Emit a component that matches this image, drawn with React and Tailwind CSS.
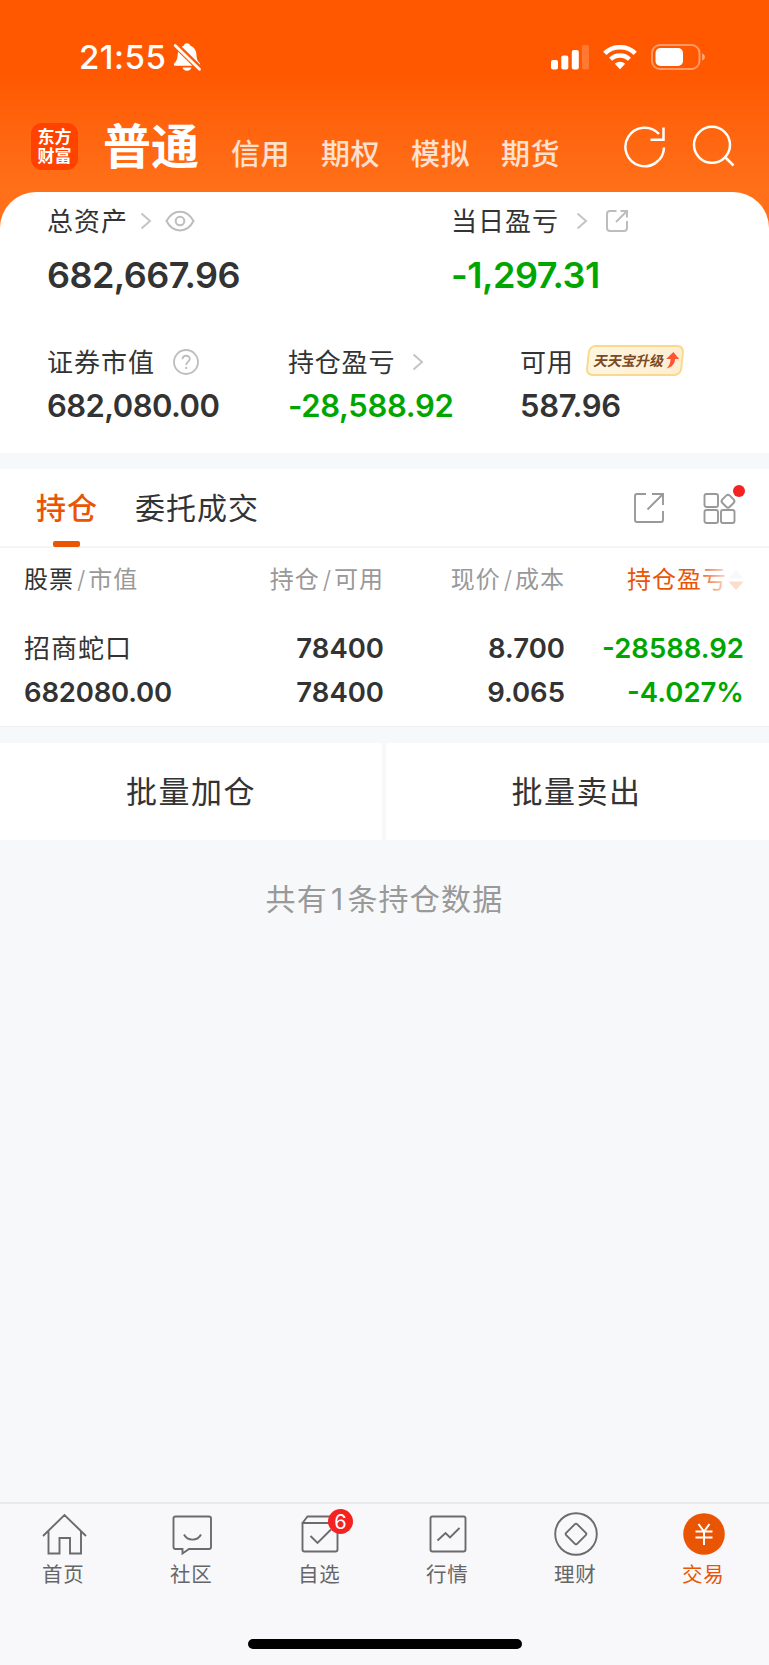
import { clsx } from "clsx";

function Chevron() {
  return (
    <svg width="12" height="18" viewBox="0 0 12 18" fill="none" stroke="#c4c4c4" strokeWidth="2">
      <path d="M1.5 1.5 L10 9 L1.5 16.5" />
    </svg>
  );
}

function StatusBar() {
  return (
    <div className="flex h-[114px] items-center pl-[79px] pr-[63px] text-white">
      <span className="text-[33px] leading-[40px] font-medium tracking-[0.5px]">21:55</span>
      <svg className="ml-[6px]" width="30" height="32" viewBox="0 0 30 32">
        <path
          fill="#fff"
          d="M15 2.2c1.7 0 3 1 3.4 2.5 3.8 1.2 5.8 4.4 6 8.6.2 5 1.2 6.8 3.2 8.7.9.9.8 2.7-.8 2.7H3.3c-1.600 0-1.800-1.700-.8-2.700 2-2 3-3.800 3.200-8.700.2-4.200 2.200-7.400 6-8.600C12 3.200 13.300 2.200 15 2.200zM10.500 26.500h9c-.5 2-2.300 3.300-4.500 3.300s-4-1.300-4.500-3.300z"
        />
        <path d="M3.300 3.600 L28 28" stroke="#ff5800" strokeWidth="6.200" />
        <path d="M3.200 4.400 L27.500 28.300" stroke="#fff" strokeWidth="2.800" strokeLinecap="round" />
      </svg>
      <div className="ml-auto flex items-center gap-[14px]">
        <svg width="38" height="25" viewBox="0 0 38 25" fill="#fff">
          <rect x="0" y="15" width="7" height="9.500" rx="2" />
          <rect x="10.300" y="10.500" width="7" height="14" rx="2" />
          <rect x="20.800" y="5" width="7" height="19.500" rx="2" />
          <rect x="31" y="0" width="7" height="24.500" rx="2" opacity="0.2" />
        </svg>
        <svg width="34" height="25" viewBox="0 0 34 25" fill="none" stroke="#fff">
          <path d="M1.800 8.400 C10 0.200 24 0.200 32.200 8.400" strokeWidth="4.600" />
          <path d="M7.600 14.300 C12.800 9.200 21.200 9.200 26.400 14.300" strokeWidth="4.400" />
          <path d="M17 24.300 L11.800 18.800 C14.700 16 19.300 16 22.200 18.800 Z" fill="#fff" stroke="none" />
        </svg>
        <svg width="55" height="26" viewBox="0 0 55 26">
          <rect x="1" y="1" width="47.500" height="24" rx="8" fill="none" stroke="#fff" strokeOpacity="0.4" strokeWidth="2" />
          <rect x="4.500" y="4" width="27.500" height="18" rx="5" fill="#fff" />
          <path d="M51 9.500 C55 10.500 55 15.500 51 16.500 Z" fill="#fff" opacity="0.45" />
        </svg>
      </div>
    </div>
  );
}

const accountTabs = ["信用", "期权", "模拟", "期货"];

function AccountHeader() {
  return (
    <div className="flex h-[78px] pl-[31px] text-white">
      <div className="mt-[9px] flex h-[47px] w-[47px] flex-col items-center justify-center rounded-[11px] bg-[#ff4200] text-[17px] leading-[19px] font-bold">
        <span>东方</span>
        <span>财富</span>
      </div>
      <span className="ml-[25px] pt-[2px] text-[48px] leading-[62px] font-bold">普通</span>
      <div className="ml-[32px] flex gap-[31px] pt-[2px] text-[29px] leading-[78px] font-medium tracking-[0.5px] text-white/80">
        {accountTabs.map((t) => (
          <span key={t}>{t}</span>
        ))}
      </div>
      <svg className="mt-[11px] ml-[63px]" width="44" height="44" viewBox="0 0 44 44" fill="none" stroke="#fff" strokeWidth="2.5">
        <path d="M41 22.5 A19.300 19.300 0 1 1 36 9" />
        <path d="M40.500 2.500 V14.800 H27.500" />
      </svg>
      <svg className="mt-[11px] ml-[25px]" width="44" height="44" viewBox="0 0 44 44" fill="none" stroke="#fff" strokeWidth="2.5">
        <circle cx="20" cy="19.800" r="18" />
        <path d="M32.500 31.500 L41.500 40.500" />
      </svg>
    </div>
  );
}

function Summary() {
  return (
    <section className="h-[261px] rounded-t-[36px] bg-white pl-[47px]">
      <div className="flex">
        <div className="w-[404px]">
          <div className="flex h-[58px] items-center">
            <span className="text-[26px] tracking-[1px]">总资产</span>
            <span className="ml-[12px]"><Chevron /></span>
            <svg className="ml-[13px]" width="30" height="22" viewBox="0 0 30 22" fill="none" stroke="#bdbdbd" strokeWidth="2">
              <path d="M1.500 11 C8 -1.500 22 -1.500 28.500 11 C22 23.500 8 23.500 1.500 11 Z" />
              <circle cx="15" cy="11" r="4.300" />
            </svg>
          </div>
          <div className="mt-px text-[36px] leading-[48px] font-semibold tracking-[-0.55px]">682,667.96</div>
        </div>
        <div>
          <div className="flex h-[58px] items-center">
            <span className="text-[26px] tracking-[1px]">当日盈亏</span>
            <span className="ml-[17px]"><Chevron /></span>
            <svg className="ml-[17px]" width="24" height="24" viewBox="0 0 24 24" fill="none" stroke="#bdbdbd" strokeWidth="2">
              <path d="M11.500 2 H5 Q2 2 2 5 V19 Q2 22 5 22 H19 Q22 22 22 19 V12" />
              <path d="M11 13 L22 2 M15.500 2 H22 V8.500" />
            </svg>
          </div>
          <div className="mt-px text-[36px] leading-[48px] font-semibold tracking-[-0.5px] text-[#00a600]">-1,297.31</div>
        </div>
      </div>
      <div className="mt-[45px] flex">
        <div className="w-[241px]">
          <div className="flex h-[36px] items-center">
            <span className="text-[26px] tracking-[1px]">证券市值</span>
            <svg className="ml-[18px]" width="26" height="26" viewBox="0 0 26 26" fill="none" stroke="#bdbdbd" strokeWidth="1.8">
              <circle cx="13" cy="13" r="12" />
              <path d="M9.500 10.300 C9.500 5.600 16.800 5.600 16.800 10 C16.800 12.500 13.200 12.800 13.200 16" />
              <path d="M13.200 17.800 V20" />
            </svg>
          </div>
          <div className="mt-[6px] text-[31px] leading-[40px] font-semibold tracking-[-0.55px]">682,080.00</div>
        </div>
        <div className="w-[232px]">
          <div className="flex h-[36px] items-center">
            <span className="text-[26px] tracking-[0.8px]">持仓盈亏</span>
            <span className="ml-[17px]"><Chevron /></span>
          </div>
          <div className="mt-[6px] text-[31px] leading-[40px] font-semibold tracking-[-0.35px] text-[#00a600]">-28,588.92</div>
        </div>
        <div>
          <div className="flex h-[36px] items-center">
            <span className="text-[26px] tracking-[0.8px]">可用</span>
            <div className="mb-[4px] ml-[13px] flex h-[31px] w-[96px] -skew-x-6 items-center rounded-[7px] border-2 border-[#fbd98a] bg-linear-to-r from-[#fff6e0] to-[#fdeed2] pl-[5px]">
              <span className="-skew-x-6 text-[14px] leading-[20px] font-bold text-[#7a4a26]">天天宝升级</span>
              <svg className="ml-[2px]" width="13" height="17" viewBox="0 0 13 17">
                <path d="M6.500 0 L13 7 H9 C9 12 7 15 1.500 16.500 C4 13.500 4.500 11 4.500 7 H0 Z" fill="#ff5533" />
              </svg>
            </div>
          </div>
          <div className="mt-[6px] text-[31px] leading-[40px] font-semibold tracking-[-0.3px]">587.96</div>
        </div>
      </div>
    </section>
  );
}

function PositionTabs() {
  return (
    <div className="flex h-[79px] items-center border-b-2 border-[#f5f5f6] pr-[32px] pl-[36px]">
      <div className="relative flex h-full items-center pt-[2px] text-[30px] font-medium tracking-[1px] text-[#ea5504]">
        持仓
        <span className="absolute bottom-[-1px] left-[17px] h-[6px] w-[27px] rounded-[2px] bg-[#ea5504]" />
      </div>
      <span className="ml-[37px] pt-[2px] text-[30px] tracking-[1px]">委托成交</span>
      <svg className="ml-auto" width="32" height="32" viewBox="0 0 32 32" fill="none" stroke="#999" strokeWidth="1.9">
        <path d="M13 2 H4 Q2 2 2 4 V28 Q2 30 4 30 H28 Q30 30 30 28 V19" />
        <path d="M14.500 17.500 L29.500 2.500 M19 2 H30 V13" />
      </svg>
      <div className="relative ml-[38px]">
        <svg width="34" height="32" viewBox="0 0 34 32" fill="none" stroke="#999" strokeWidth="1.9">
          <rect x="1.500" y="2" width="13.500" height="13" rx="2" />
          <rect x="1.500" y="18" width="13.500" height="13" rx="2" />
          <rect x="18" y="18" width="13.500" height="13" rx="2" />
          <rect x="19.800" y="4" width="10.400" height="10.400" rx="2.500" transform="rotate(45 25 9.200)" />
        </svg>
        <span className="absolute top-[-7px] right-[-8px] h-[12px] w-[12px] rounded-full bg-[#f52222]" />
      </div>
    </div>
  );
}

const holdings = [
  { name: "招商蛇口", value: "682080.00", qty: "78400", avail: "78400", price: "8.700", cost: "9.065", profit: "-28588.92", rate: "-4.027%" },
];

function Slash() {
  return <span className="mr-[2px] ml-[3px] font-light">/</span>;
}

function PositionTable() {
  return (
    <div className="h-[179px] border-b border-[#efeff1] pr-[25px] pl-[24px]">
      <div className="grid h-[64px] grid-cols-[179px_181px_181px_179px] items-center text-right text-[24px] tracking-[1px] whitespace-nowrap text-[#999]">
        <div className="text-left">
          <span className="text-[#333]">股票</span>
          <Slash />
          市值
        </div>
        <div>
          持仓
          <Slash />
          可用
        </div>
        <div>
          现价
          <Slash />
          成本
        </div>
        <div className="relative flex items-center justify-end text-[#ea5504]">
          持仓盈亏
          <svg className="ml-px" width="16" height="20" viewBox="0 0 16 20">
            <path d="M8 0 L15.500 8.500 H0.500 Z" fill="#ddd" />
            <path d="M8 20 L15.500 11.500 H0.500 Z" fill="#ea5504" />
          </svg>
          <span className="absolute top-0 right-0 h-full w-[48px] bg-linear-to-r from-white/0 via-white/80 via-65% to-white/80" />
        </div>
      </div>
      {holdings.map((h) => (
        <div
          key={h.name}
          className="mt-[14px] grid grid-cols-[179px_181px_181px_179px] text-right text-[27.5px] leading-[44px] font-semibold"
        >
          <div className="text-left">
            <div className="relative top-px text-[26px] font-normal tracking-[1px]">{h.name}</div>
            <div className="tracking-[-0.2px]">{h.value}</div>
          </div>
          <div>
            <div>{h.qty}</div>
            <div>{h.avail}</div>
          </div>
          <div>
            <div>{h.price}</div>
            <div>{h.cost}</div>
          </div>
          <div className="text-[#00a600]">
            <div>{h.profit}</div>
            <div>{h.rate}</div>
          </div>
        </div>
      ))}
    </div>
  );
}

const navItems = [
  {
    label: "首页",
    icon: (
      <path d="M1 23 L22.500 2 L44 23 M6.500 18.500 V40.500 H17.500 V25 H28 V40.500 H39 V18.500" />
    ),
  },
  {
    label: "社区",
    icon: (
      <>
        <path d="M5.500 3.500 H39 Q41 3.500 41 5.500 V34 Q41 36 39 36 H19 L12.500 40.500 V36 H5.500 Q3.500 36 3.500 34 V5.500 Q3.500 3.500 5.500 3.500 Z" />
        <path d="M14 21.500 C17.500 28.300 27.500 28.300 31 21.500" />
      </>
    ),
  },
  {
    label: "自选",
    badge: 6,
    icon: (
      <>
        <path d="M4.500 10 H39.500 V36.500 Q39.500 38.500 37.500 38.500 H6.500 Q4.500 38.500 4.500 36.500 Z L9.500 3.500 H36 L39.500 10" />
        <path d="M12.500 23 L19.500 30 L33 16.500" />
      </>
    ),
  },
  {
    label: "行情",
    icon: (
      <>
        <rect x="4.500" y="3.500" width="35" height="35" rx="2" />
        <path d="M11.500 27.500 L19.500 20 L24 24.500 L33.500 15" />
      </>
    ),
  },
  {
    label: "理财",
    icon: (
      <>
        <circle cx="22" cy="21" r="20.800" />
        <rect x="14.300" y="13.300" width="15.400" height="15.400" rx="1.500" transform="rotate(45 22 21)" />
      </>
    ),
  },
  {
    label: "交易",
    active: true,
    icon: (
      <>
        <circle cx="22" cy="21" r="20.800" fill="#ea5504" stroke="none" />
        <path d="M16.500 11 L22 18.500 L27.500 11 M22 18.500 V32 M13.500 18.500 H30.500 M13.500 24.500 H30.500" stroke="#fff" strokeWidth="2" />
      </>
    ),
  },
];

function BottomNav() {
  return (
    <nav className="mt-auto h-[163px] border-t-2 border-[#e9eaec] bg-[#f8f8fb]">
      <div className="flex h-[135px]">
        {navItems.map((n) => (
          <div key={n.label} className="relative w-[128px] shrink-0 pt-[8px]">
            <svg className="ml-[41.5px]" width="46" height="44" viewBox="0 -1 46 44" fill="none" stroke="#6b6b6d" strokeWidth="1.9">
              {n.icon}
            </svg>
            {n.badge && (
              <span className="absolute top-[5px] left-[72px] flex h-[25px] w-[25px] items-center justify-center rounded-full bg-[#f52222] text-[20px] text-white">
                {n.badge}
              </span>
            )}
            <div
              className={clsx(
                "mt-[5px] pl-[42px] text-[20.5px] leading-[28px] tracking-[0.8px]",
                n.active ? "text-[#ea5504]" : "text-[#666]"
              )}
            >
              {n.label}
            </div>
          </div>
        ))}
      </div>
      <div className="mx-auto h-[10px] w-[274px] rounded-full bg-black" />
    </nav>
  );
}

export default function App() {
  return (
    <div className="flex h-[1665px] w-[769px] flex-col overflow-hidden bg-[#f7f8fa] font-['Inter','Noto_Sans_CJK_SC',sans-serif] text-[#333]">
      <div className="bg-linear-to-b from-[#ff5800] from-[72px] to-[#ff7019] to-[190px]">
        <StatusBar />
        <AccountHeader />
        <Summary />
      </div>
      <section className="mt-[16px] bg-white">
        <PositionTabs />
        <PositionTable />
      </section>
      <div className="mt-[16px] flex h-[97px] gap-[4px] text-[31px] tracking-[1.5px]">
        <button className="w-[382px] bg-white pt-[2px]">批量加仓</button>
        <button className="flex-1 bg-white pt-[2px] pr-[2px]">批量卖出</button>
      </div>
      <div className="mt-[37px] text-center text-[30px] leading-[44px] tracking-[1.2px] text-[#999]">
        共有<span className="mx-[3px]">1</span>条持仓数据
      </div>
      <BottomNav />
    </div>
  );
}
